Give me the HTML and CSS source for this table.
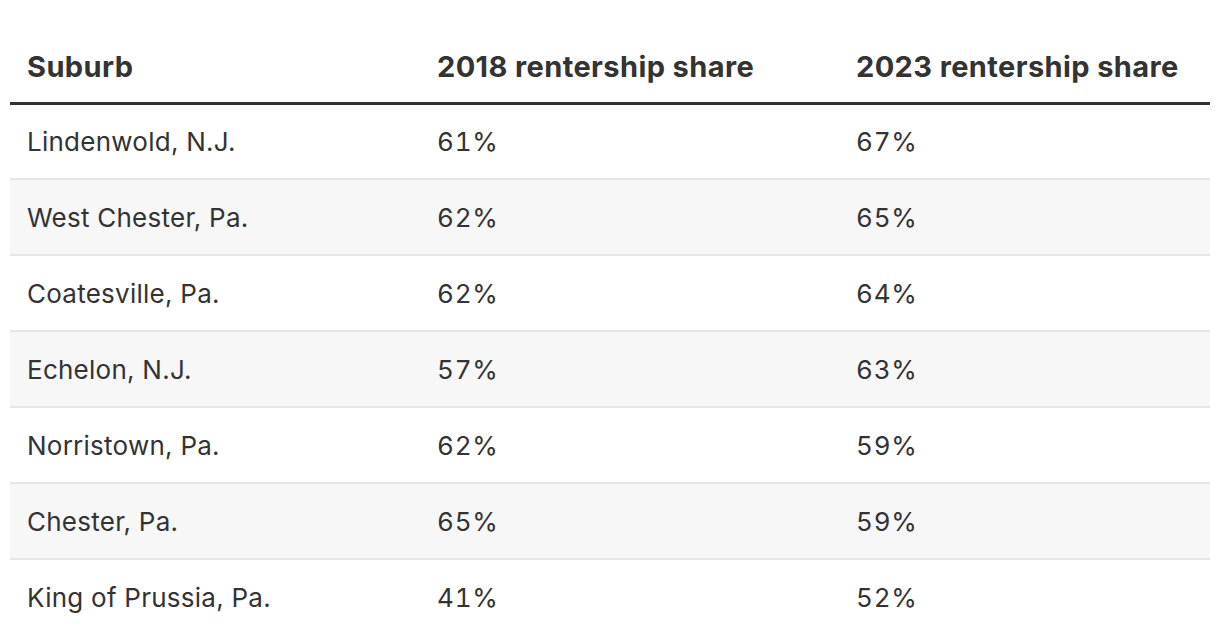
FILE: index.html
```html
<!DOCTYPE html>
<html>
<head>
<meta charset="utf-8">
<link rel="stylesheet" href="styles.css">
</head>
<body>
<table class="data">
  <colgroup>
    <col class="c1"><col class="c2"><col class="c3">
  </colgroup>
  <thead>
    <tr><th>Suburb</th><th>2018 rentership share</th><th>2023 rentership share</th></tr>
  </thead>
  <tbody>
    <tr><td>Lindenwold, N.J.</td><td class="num">61%</td><td class="num">67%</td></tr>
    <tr><td>West Chester, Pa.</td><td class="num">62%</td><td class="num">65%</td></tr>
    <tr><td>Coatesville, Pa.</td><td class="num">62%</td><td class="num">64%</td></tr>
    <tr><td>Echelon, N.J.</td><td class="num">57%</td><td class="num">63%</td></tr>
    <tr><td>Norristown, Pa.</td><td class="num">62%</td><td class="num">59%</td></tr>
    <tr><td>Chester, Pa.</td><td class="num">65%</td><td class="num">59%</td></tr>
    <tr><td>King of Prussia, Pa.</td><td class="num">41%</td><td class="num">52%</td></tr>
  </tbody>
</table>
</body>
</html>
```

FILE: styles.css
```css
html, body {
  margin: 0;
  padding: 0;
  background: #fff;
}
body {
  padding: 0 10px;
  font-family: Inter, "Liberation Sans", sans-serif;
  color: #333;
}
.data {
  width: 1200px;
  border-collapse: collapse;
  table-layout: fixed;
}
.c1 { width: 410px; }
.c2 { width: 419px; }
.c3 { width: 371px; }
.data th {
  text-align: left;
  font-weight: 700;
  font-size: 29px;
  height: 103px;
  box-sizing: border-box;
  padding: 31px 17px 0;
  vertical-align: middle;
  border-bottom: 3px solid #333;
  letter-spacing: 0.4px;
}
.data td {
  font-size: 26px;
  font-weight: 400;
  letter-spacing: 0.25px;
  height: 76px;
  box-sizing: border-box;
  padding: 0 17px;
  vertical-align: middle;
  border-top: 2px solid #e6e6e6;
}
.data td.num {
  font-variant-numeric: tabular-nums;
  letter-spacing: 0.8px;
}
.data tbody tr:first-child td {
  border-top: none;
}
.data tbody tr:nth-child(even) td {
  background: #f7f7f7;
}
```
